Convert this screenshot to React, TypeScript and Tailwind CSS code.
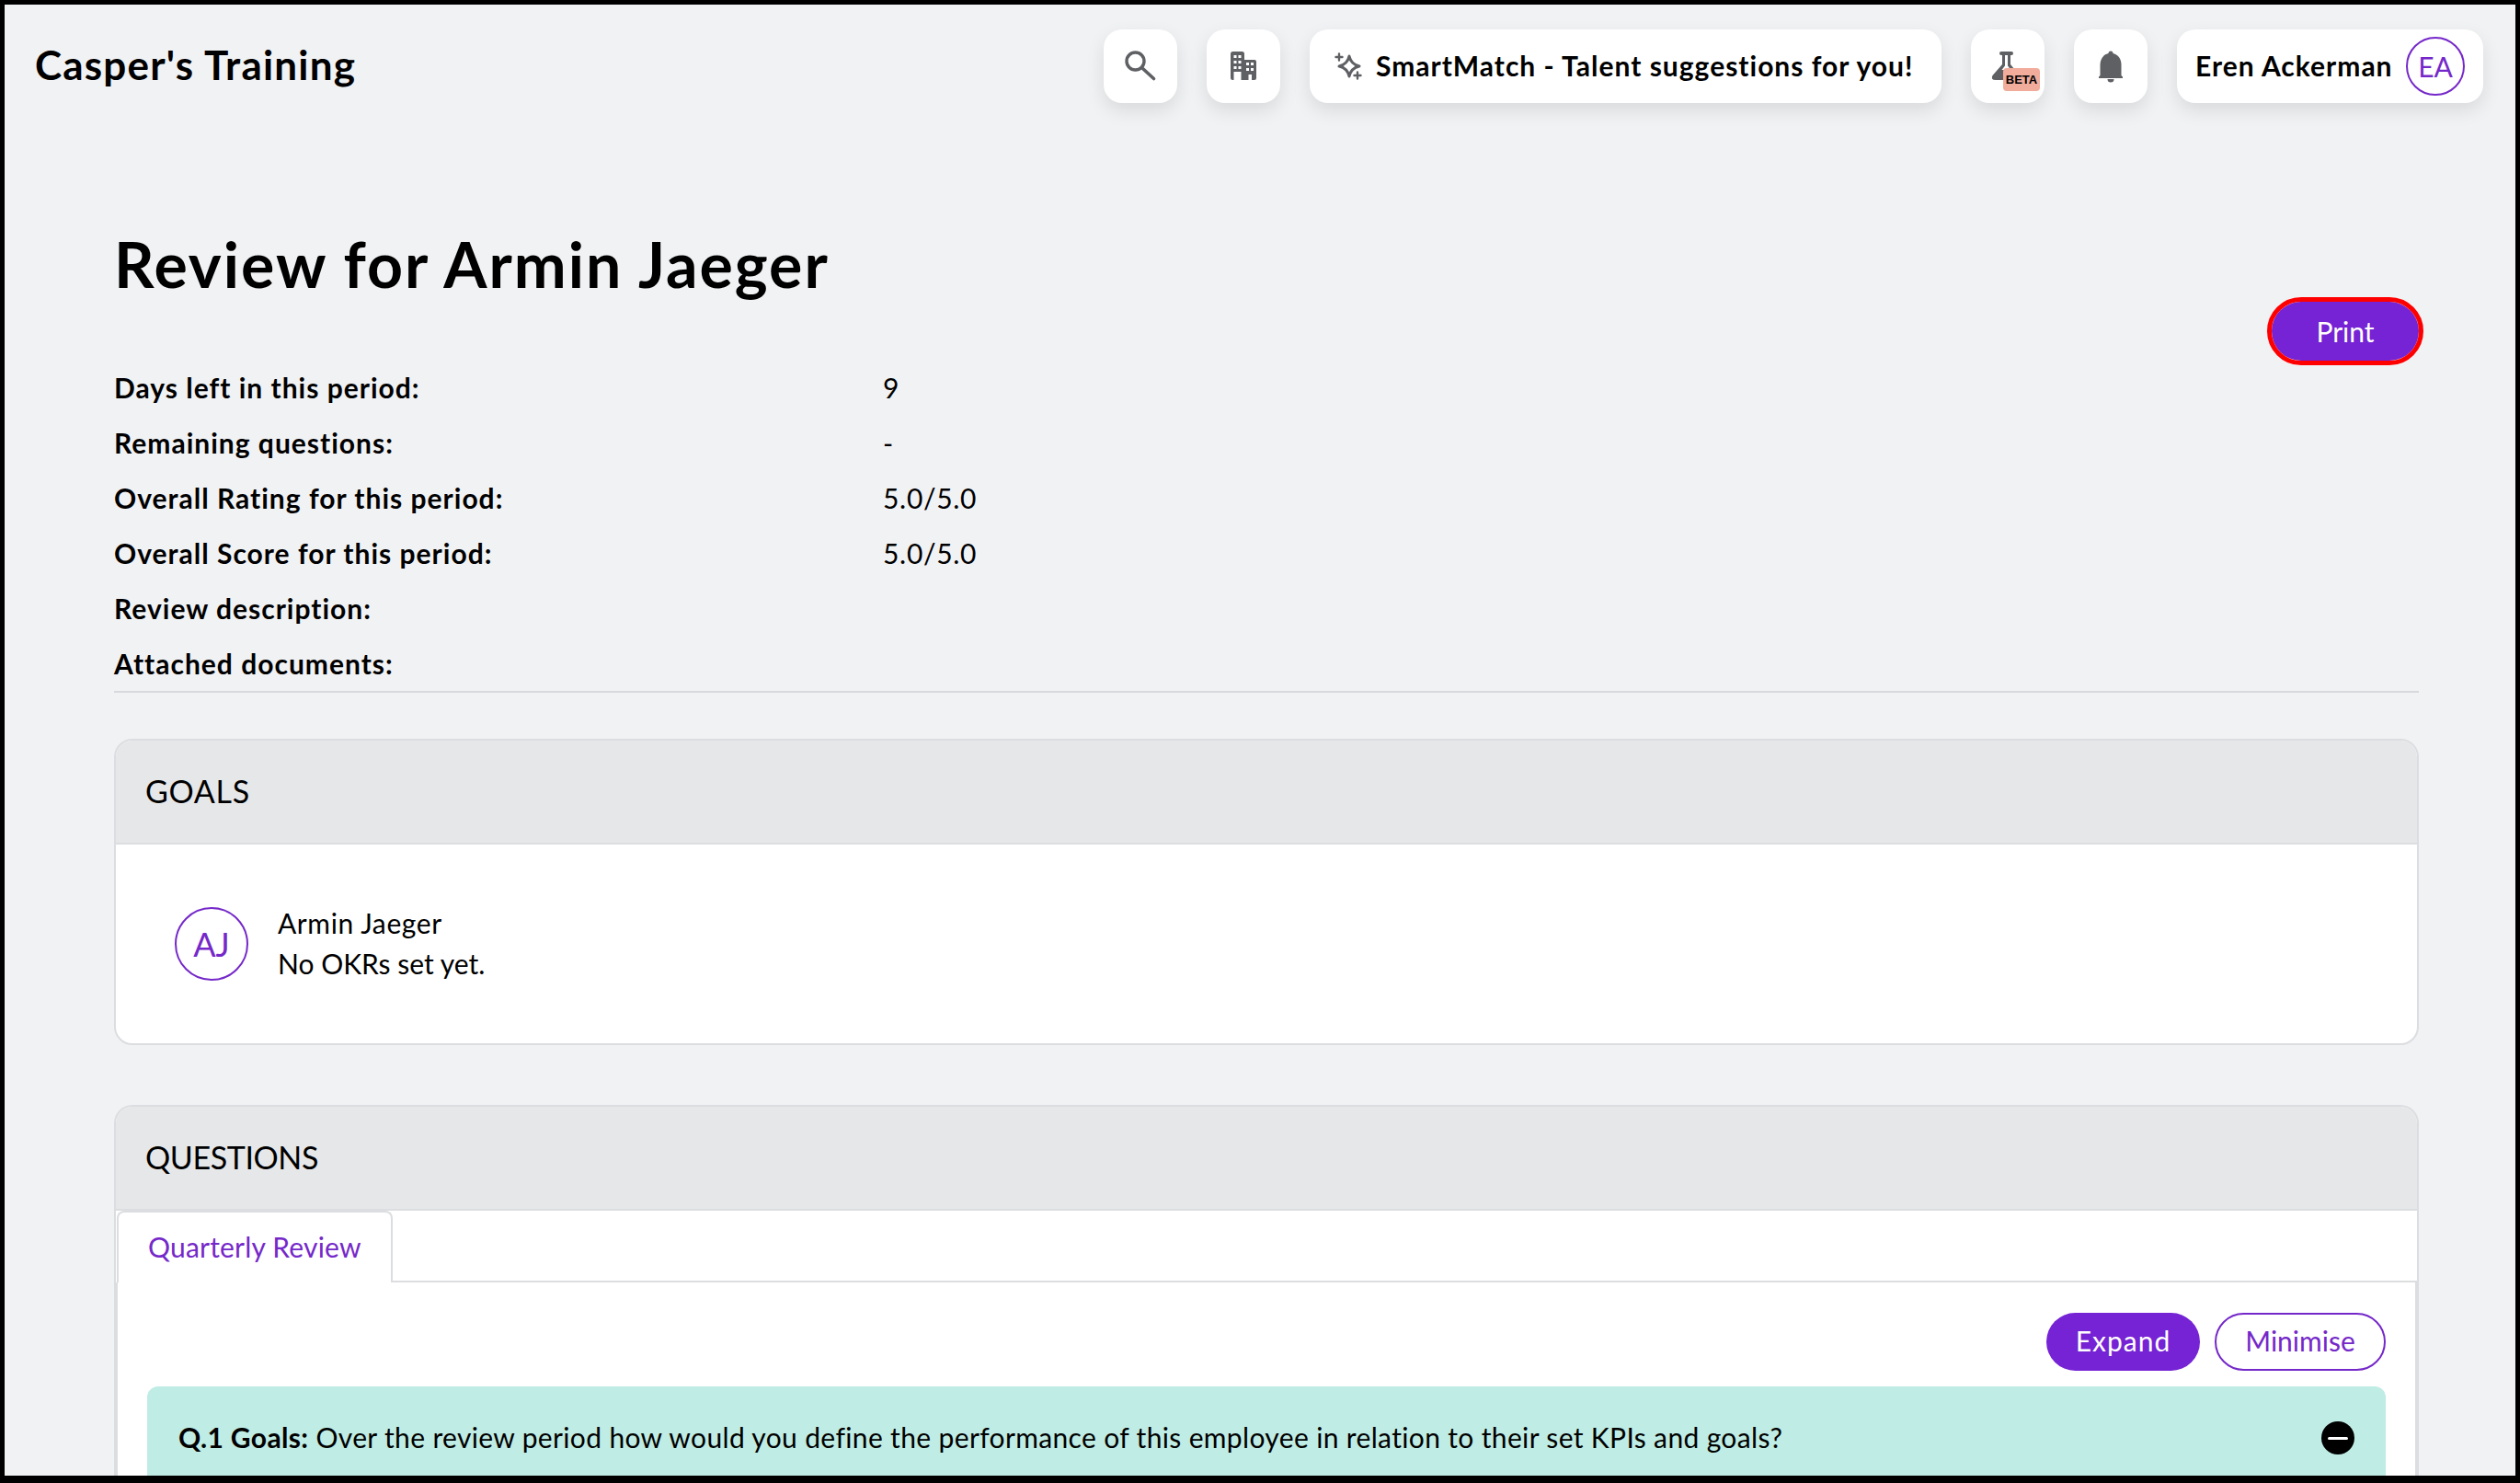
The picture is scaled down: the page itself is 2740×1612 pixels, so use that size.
const font = "font-['Lato','Liberation_Sans',sans-serif]"

const details = [
  { label: 'Days left in this period:', value: '9' },
  { label: 'Remaining questions:', value: '-' },
  { label: 'Overall Rating for this period:', value: '5.0/5.0' },
  { label: 'Overall Score for this period:', value: '5.0/5.0' },
  { label: 'Review description:', value: '' },
  { label: 'Attached documents:', value: '' },
]

function SearchIcon() {
  return (
    <svg viewBox="0 0 80 80" className="w-20 h-20" fill="none" stroke="#5f6064">
      <circle cx="34.500" cy="34.500" r="9.500" strokeWidth="3.400" />
      <path d="M42 42l12.500 11.500" strokeWidth="3.600" strokeLinecap="round" />
    </svg>
  )
}

function BuildingIcon() {
  const big = [28, 34, 40]
  const small = [36, 42]
  return (
    <svg viewBox="0 0 80 80" className="w-20 h-20">
      <path d="M26 26.500a2.500 2.500 0 0 1 2.500-2.500h10a2.500 2.500 0 0 1 2.500 2.500V33h11a2 2 0 0 1 2 2v18a2 2 0 0 1-2 2H28.500a2.500 2.500 0 0 1-2.500-2.500z" fill="#5f6064" />
      {big.map((y) => (
        <g key={y} fill="#fff">
          <rect x="29.500" y={y} width="3" height="3" />
          <rect x="34.500" y={y} width="3" height="3" />
        </g>
      ))}
      <rect x="29.500" y="46" width="8" height="9" fill="#fff" />
      {small.map((y) => (
        <g key={y} fill="#fff">
          <rect x="43" y={y} width="3" height="3" />
          <rect x="48" y={y} width="3" height="3" />
        </g>
      ))}
      <rect x="45.500" y="49" width="3.500" height="6" fill="#fff" />
    </svg>
  )
}

function SparkIcon() {
  return (
    <svg viewBox="0 0 32 32" className="w-8 h-8" fill="none" stroke="#5f6064">
      <path d="M16 5Q18 14 27 16 18 18 16 27 14 18 5 16 14 14 16 5Z" strokeWidth="3" strokeLinejoin="round" />
      <path d="M5 2.500v7M1.500 6h7M25 22.500v7M21.500 26h7" strokeWidth="2.400" strokeLinecap="round" />
    </svg>
  )
}

function FlaskIcon() {
  return (
    <svg viewBox="0 0 80 80" className="w-20 h-20">
      <rect x="31" y="24" width="15" height="4" rx="2" fill="#5f6064" />
      <path d="M34 26V38L23.500 50Q21 55 27 55H50Q56 55 53 50L43 38V26Z" fill="#5f6064" />
      <path d="M37 28H40V39.500L43.500 44H33.500L37 39.500Z" fill="#fff" />
    </svg>
  )
}

function BellIcon() {
  return (
    <svg viewBox="0 0 80 80" className="w-20 h-20" fill="#5f6064">
      <path d="M40 23.500a2.500 2.500 0 0 1 2.500 2.500c6 1.500 9 6.500 9 12.500V50l1.500 1.500V53H27v-1.500l1.500-1.500V38.500c0-6 3-11 9-12.500a2.500 2.500 0 0 1 2.500-2.500z" />
      <path d="M36.500 54h7a3.500 3.500 0 0 1-7 0z" />
    </svg>
  )
}

function TopButton({ children }: { children: React.ReactNode }) {
  return (
    <button className="relative w-20 h-20 bg-white rounded-[20px] shadow-[0_8px_20px_rgba(0,0,0,0.1)] flex items-center justify-center">
      {children}
    </button>
  )
}

export default function App() {
  return (
    <div className={`w-[2740px] h-[1612px] overflow-hidden bg-[#f1f2f4] border-black border-t-[5px] border-l-[5px] border-r-[5px] border-b-[8px] text-black ${font}`}>
      <header className="flex items-center justify-between pt-[27px] pl-[33px] pr-[35px]">
        <div className="text-[44px] font-bold leading-[76px] tracking-[1.2px] pb-[4px]">Casper's Training</div>
        <div className="flex items-center gap-8">
          <TopButton>
            <SearchIcon />
          </TopButton>
          <TopButton>
            <BuildingIcon />
          </TopButton>
          <button className="w-[687px] h-20 bg-white rounded-[20px] shadow-[0_8px_20px_rgba(0,0,0,0.1)] flex items-center pl-[27px] gap-[13px] text-[30px] font-bold tracking-[1px]">
            <SparkIcon />
            <span className="pb-[2px]">SmartMatch - Talent suggestions for you!</span>
          </button>
          <TopButton>
            <FlaskIcon />
            <span className="absolute left-[35px] top-[42px] w-10 h-[25px] bg-[#f1ac9c] rounded-[4px] text-[13px] font-bold leading-[25px] text-center text-black font-['Liberation_Sans',sans-serif]">BETA</span>
          </TopButton>
          <TopButton>
            <BellIcon />
          </TopButton>
          <div className="w-[333px] h-20 bg-white rounded-[20px] shadow-[0_8px_20px_rgba(0,0,0,0.1)] flex items-center justify-between pl-5 pr-5">
            <span className="text-[30px] font-bold tracking-[1px] pb-[2px]">Eren Ackerman</span>
            <div className="w-[64px] h-[64px] rounded-full border-2 border-[#7528c9] text-[#7528c9] text-[30px] flex items-center justify-center">EA</div>
          </div>
        </div>
      </header>

      <main className="pl-[119px] pr-[105px]">
        <div className="flex justify-between items-start border-b-2 border-[#d8d9dc]">
          <div>
            <h1 className="mt-[135px] text-[68px] leading-[80px] font-bold tracking-[2px]">Review for Armin Jaeger</h1>
            <div className="mt-[64px]">
              {details.map((row) => (
                <div key={row.label} className="flex h-[60px] items-center text-[30px]">
                  <div className="w-[836px] font-bold tracking-[1px]">{row.label}</div>
                  <div className="tracking-[0.7px]">{row.value}</div>
                </div>
              ))}
            </div>
          </div>
          <button className="mt-[216px] w-[160px] h-[64px] rounded-full bg-[#7523d4] text-white text-[30px] outline-[5px] outline-[#ff0000]">Print</button>
        </div>

        <section className="mt-[50px] rounded-[20px] border-2 border-[#dcdde0] overflow-hidden bg-white">
          <div className="h-[113px] bg-[#e6e7e9] border-b-2 border-[#dcdde0] flex items-center pl-8 pb-[2px] text-[34px] tracking-[0.7px]">GOALS</div>
          <div className="h-[216px] flex items-center pl-[64px] gap-8">
            <div className="w-20 h-20 shrink-0 rounded-full border-2 border-[#7528c9] text-[#7528c9] text-[36px] flex items-center justify-center">AJ</div>
            <div className="text-[30px] leading-[44px] pb-[2px]">
              <div className="tracking-[0.6px]">Armin Jaeger</div>
              <div>No OKRs set yet.</div>
            </div>
          </div>
        </section>

        <section className="mt-[65px] rounded-t-[20px] border-2 border-b-0 border-[#dcdde0] bg-white">
          <div className="h-[113px] rounded-t-[18px] bg-[#e6e7e9] border-b-2 border-[#dcdde0] flex items-center pl-8 pb-[2px] text-[34px] tracking-[-0.4px]">QUESTIONS</div>
          <div className="flex h-[78px]">
            <div className="w-[300px] ml-[1px] border-2 border-b-0 border-[#dcdde0] rounded-t-[8px] pl-[32px] pb-[2px] flex items-center text-[30px] tracking-[0.2px] text-[#7528c9]">Quarterly Review</div>
            <div className="flex-1 border-b-2 border-[#dcdde0]" />
          </div>
          <div className="border-x-2 border-[#dcdde0] px-[32px] pt-[33px]">
            <div className="flex justify-end gap-4">
              <button className="w-[167px] h-[63px] pb-[2px] rounded-full bg-[#7523d4] text-white text-[30px] tracking-[1px]">Expand</button>
              <button className="w-[186px] h-[63px] pb-[2px] rounded-full border-2 border-[#7528c9] text-[#7528c9] text-[30px]">Minimise</button>
            </div>
            <div className="mt-[17px] h-[112px] rounded-[12px] bg-[#bfece4] flex items-center justify-between pl-[34px] pr-[34px] text-[30px] tracking-[0.35px]">
              <div className="pb-[2px]">
                <span className="font-bold">Q.1 Goals:</span> Over the review period how would you define the performance of this employee in relation to their set KPIs and goals?
              </div>
              <div className="w-9 h-9 rounded-full bg-black flex items-center justify-center">
                <div className="w-[22px] h-[3px] rounded-full bg-white" />
              </div>
            </div>
          </div>
        </section>
      </main>
    </div>
  )
}
